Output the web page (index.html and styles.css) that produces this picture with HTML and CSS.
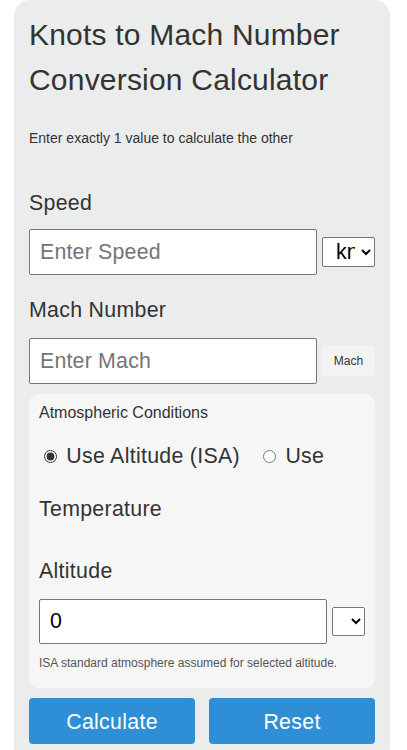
FILE: index.html
```html
<!DOCTYPE html>
<html lang="en">
<head>
<meta charset="utf-8">
<title>Knots to Mach Number Conversion Calculator</title>
<link rel="stylesheet" href="styles.css">
</head>
<body>
<main class="card">
  <h1 class="title">Knots to Mach Number Conversion Calculator</h1>
  <p class="intro">Enter exactly 1 value to calculate the other</p>

  <label class="field-label" for="speed">Speed</label>
  <div class="row">
    <input class="text-input" id="speed" type="text" placeholder="Enter Speed">
    <select class="unit-select">
      <option>knots</option>
      <option>km/h</option>
      <option>mph</option>
    </select>
  </div>

  <label class="field-label label-gap" for="mach">Mach Number</label>
  <div class="row">
    <input class="text-input" id="mach" type="text" placeholder="Enter Mach">
    <span class="unit-tag">Mach</span>
  </div>

  <section class="atmos">
    <div class="atmos-title">Atmospheric Conditions</div>
    <div class="radios">
      <label class="radio-label"><input type="radio" name="mode" checked> Use Altitude (ISA)</label>
      <label class="radio-label"><input type="radio" name="mode"> <span>Use</span> <span>Temperature</span></label>
    </div>
    <label class="field-label alt-label" for="alt">Altitude</label>
    <div class="row">
      <input class="text-input value-input" id="alt" type="text" value="0">
      <select class="unit-select small-select">
        <option></option>
      </select>
    </div>
    <p class="hint">ISA standard atmosphere assumed for selected altitude.</p>
  </section>

  <div class="actions">
    <button class="btn" type="button">Calculate</button>
    <button class="btn" type="button">Reset</button>
  </div>
</main>
</body>
</html>
```

FILE: styles.css
```css
html, body {
  margin: 0;
  padding: 0;
  background: #ffffff;
}

body {
  font-family: "Liberation Sans", Arial, sans-serif;
  color: #333333;
}

.card {
  box-sizing: border-box;
  width: 376px;
  margin: 0 0 0 14px;
  padding: 12px 15px 20px 15px;
  background: #ebecec;
  border-radius: 16px;
}

.title {
  margin: 0;
  font-size: 30px;
  line-height: 45px;
  font-weight: normal;
  letter-spacing: 0.2px;
  color: #333333;
}

.intro {
  margin: 28px 0 0 0;
  font-size: 14px;
  line-height: 16px;
}

.field-label {
  display: block;
  margin-top: 45px;
  font-size: 21.33px;
  line-height: 24px;
  letter-spacing: 0.3px;
}

.label-gap {
  margin-top: 23px;
}

.row {
  display: flex;
  align-items: center;
  gap: 5px;
  margin-top: 14px;
}

.label-gap + .row {
  margin-top: 16px;
}

.text-input {
  flex: 1;
  min-width: 0;
  box-sizing: border-box;
  height: 46px;
  margin: 0;
  padding: 0 10px;
  border: 1px solid #767676;
  border-radius: 2px;
  background: #ffffff;
  font-family: "Liberation Sans", Arial, sans-serif;
  font-size: 21.33px;
  letter-spacing: 0.2px;
  color: #000000;
}

.text-input::placeholder {
  color: #757575;
}

.unit-select {
  box-sizing: border-box;
  width: 53px;
  height: 30px;
  margin: 0;
  padding: 0 3px 0 9px;
  font-family: "Liberation Sans", Arial, sans-serif;
  font-size: 21.33px;
  color: #000000;
  background: #ffffff;
  border: 1px solid #767676;
  border-radius: 2px;
}

.small-select {
  width: 33px;
  height: 29px;
  padding: 0 3px;
}

.unit-tag {
  box-sizing: border-box;
  width: 53px;
  height: 30px;
  display: flex;
  align-items: center;
  justify-content: center;
  background: #f3f3f3;
  border-radius: 4px;
  font-size: 12px;
  color: #333333;
}

.atmos {
  margin-top: 10px;
  padding: 10px 10px 18px 10px;
  background: #f6f6f6;
  border-radius: 10px;
}

.atmos-title {
  font-size: 16px;
  line-height: 18px;
}

.radios {
  margin-top: 8px;
  font-size: 21.33px;
  line-height: 53px;
  letter-spacing: 0.3px;
}

.radio-label {
  margin-right: 12px;
}

.radio-label input {
  accent-color: #333333;
}

.alt-label {
  margin-top: 23px;
}

.alt-label + .row {
  margin-top: 16px;
}

.value-input {
  height: 45px;
}

.hint {
  margin: 12px 0 0 0;
  font-size: 12px;
  line-height: 14px;
  color: #555555;
}

.actions {
  display: flex;
  gap: 14px;
  margin-top: 10px;
}

.btn {
  flex: 1;
  height: 46px;
  margin: 0;
  padding: 2px 0 0 0;
  border: none;
  border-radius: 4px;
  background: #2e8fd6;
  color: #ffffff;
  font-family: "Liberation Sans", Arial, sans-serif;
  font-size: 21.33px;
  letter-spacing: 0.3px;
}
```
